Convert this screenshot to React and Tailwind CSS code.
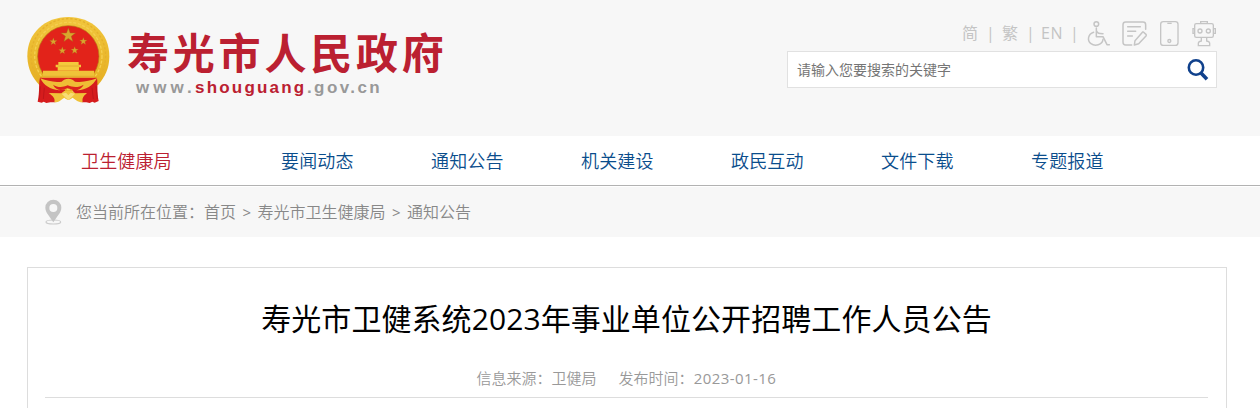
import { clsx } from 'clsx'

const navItems = ["卫生健康局", "要闻动态", "通知公告", "机关建设", "政民互动", "文件下载", "专题报道"]

export default function App() {
    return (
        <div className="h-[408px] w-[1260px] overflow-hidden bg-white font-['Open_Sans','Noto_Sans_CJK_SC',sans-serif]">
            <Header />
            <Nav />
            <Breadcrumb />
            <Article />
        </div>
    )
}

const Header = () => {
    return (
        <header className="flex h-[136px] justify-between bg-[#f7f7f7] pl-[27px] pr-[43px]">
            <div className="flex pt-4">
                <Emblem />
                <div className="ml-[16px] pt-[14px]">
                    <h1 className="h-[49px] whitespace-nowrap font-['Liberation_Sans','Noto_Sans_CJK_SC',sans-serif] text-[42px] leading-[49px] font-bold tracking-[3.8px] text-[#bb2031]">寿光市人民政府</h1>
                    <p className="ml-[9px] flex whitespace-nowrap font-['Liberation_Sans',sans-serif] text-[17px] leading-[18px] font-bold text-[#999]">
                        <span className="w-[59px] tracking-[4px]">www.</span>
                        <span className="w-[112px] tracking-[2.2px] text-[#bb2031]">shouguang</span>
                        <span className="tracking-[2.4px]">.gov.cn</span>
                    </p>
                </div>
            </div>
            <div className="flex w-[430px] flex-col">
                <div className="flex h-[51px] items-end justify-end pb-[4px]">
                    <div className="mr-[9px] flex h-[27px] items-center text-base leading-[27px] whitespace-pre text-[#c4c4c4]">
                        <span className="w-[24px]">简</span>
                        <span className="w-[16px]">|</span>
                        <span className="w-[24px]">繁</span>
                        <span className="w-[15px]">|</span>
                        <span className="w-[29px] tracking-[0.7px]">EN</span>
                        <span className="w-[8px]">|</span>
                    </div>
                    <Tools />
                </div>
                <div className="flex h-[37px] items-center justify-between border border-[#e1e1e1] bg-white pr-[7px] pl-[9px]">
                    <span className="text-[14px] text-[#757575]">请输入您要搜索的关键字</span>
                    <svg width="22" height="24" viewBox="0 0 22 24" fill="none" stroke="#10418c">
                        <circle cx="9" cy="9.5" r="7.2" strokeWidth="2.6" />
                        <path d="M14 15l6 6.3" strokeWidth="3.6" />
                    </svg>
                </div>
            </div>
        </header>
    )
}

const Star = ({ x, y, s }) => (
    <path
        transform={`translate(${x} ${y}) scale(${s})`}
        d="M0-10L2.5-3.2 9.8-3.1 4 1.3 6.1 8.3 0 4.2-6.1 8.3-4 1.3-9.8-3.1-2.5-3.2z"
        fill="#d9a62e"
        stroke="#a9631b"
        strokeWidth="0.6"
    />
)

const Emblem = () => {
    return (
        <svg className="shrink-0" width="84" height="88" viewBox="36 33 252 264">
            <defs>
                <linearGradient id="gold" x1="0" y1="0" x2="0" y2="1">
                    <stop offset="0" stopColor="#f1c63d" />
                    <stop offset="1" stopColor="#e5ad20" />
                </linearGradient>
            </defs>
            <path d="M160 36C90 36 36 84 37 154c1 42 18 66 34 84l28 20h124l28-20c18-22 32-46 32-84C283 84 230 36 160 36z" fill="url(#gold)" />
            <circle cx="160" cy="153" r="112" fill="none" stroke="#e5b02c" strokeWidth="4" strokeDasharray="7 6" />
            <circle cx="160" cy="153" r="101" fill="none" stroke="#f5cf50" strokeWidth="4" strokeDasharray="9 5" />
            <circle cx="160" cy="154" r="92" fill="#e2231a" stroke="#b67816" strokeWidth="2" />
            <Star x="160" y="91" s="2.2" />
            <Star x="115" y="110" s="1.15" />
            <Star x="205" y="109" s="1.15" />
            <Star x="142" y="137" s="1.15" />
            <Star x="179" y="136" s="1.15" />
            {/* gate tower */}
            <path d="M130 171h61v8h7v8h-6v10h-64v-10h-6v-8h8z" fill="#f4ca3c" />
            <path d="M84 197h153v22H84z" fill="#f0c239" />
            <path d="M128 183h65M84 214h153" stroke="#d9a429" strokeWidth="2" />
            <path d="M75 218l170 0-12 34H90z" fill="#d9201b" />
            {/* ribbons */}
            <path d="M75 218c-5 20 0 38-7 72l12 3 6-3 8 4 12-2h15l20-18 10-20z" fill="#d61c1d" />
            <path d="M246 220c3 18-1 40 5 68l-12 5-7-3-8 4-10-2h-13l-20-18-10-22z" fill="#d61c1d" />
            <path d="M76 244l-3 40M88 248l-3 34M243 244l4 38M231 248l4 34" stroke="#bb1519" strokeWidth="2.5" />
            <path d="M76 220c22 8 40 13 64 10 10-12 30-12 40 0 24 3 43-2 66-10-12 22-34 35-58 36l-28-5-28 5c-26-2-46-15-56-36z" fill="#efbd35" />
            <path d="M114 239c14 8 26 10 44 2 19 8 34 6 48-2-12 22-32 18-48 10-16 8-34 10-44-10z" fill="#dc231c" />
            <path d="M101 264l38 1 9-7h24l9 7 35-1c-14 12-14 16-13 28-16 0-23-11-31-14-9 9-15 8-24 0-10 5-14 14-30 14 3-10-2-18-17-28z" fill="#f0c238" />
            <path d="M140 266l13-3 7 8 7-8 13 3-12 12-8 6-8-6z" fill="#f8dd75" />
        </svg>
    )
}

const Tools = () => {
    return (
        <div className="flex text-[#c5c5c5]">
            <svg className="mr-[10px]" width="24" height="27" viewBox="0 0 72 81" fill="none" stroke="currentColor" strokeWidth="4.5" strokeLinecap="round" strokeLinejoin="round">
                <circle cx="28" cy="12" r="7" />
                <path d="M28 24v26h20l12 24h7M28 32c4 9 8 9 20 9" />
                <path d="M20 37C2 43 0 62 12 71s34 4 36-13" />
            </svg>
            <svg className="mr-[11px]" width="27" height="27" viewBox="0 0 81 81" fill="none" stroke="currentColor" strokeWidth="4.5" strokeLinecap="round" strokeLinejoin="round">
                <path d="M32 75H14q-8 0-8-8V14q0-8 8-8h52q8 0 8 8v14M20 20h38M20 34h24M20 48h14" />
                <path d="M67 36l8 7q2 2 0 5L53 71l-13 4 2-13 23-26q1-1 2 0z" />
            </svg>
            <svg className="mr-[11px]" width="21" height="27" viewBox="0 0 63 81" fill="none" stroke="currentColor" strokeWidth="4">
                <rect x="5" y="5" width="52" height="71" rx="8" />
                <path d="M25 10h13" />
                <circle cx="31" cy="63" r="4.5" />
            </svg>
            <svg width="26" height="27" viewBox="0 0 78 81" fill="none" stroke="currentColor" strokeWidth="4">
                <rect x="11" y="11" width="56" height="41" rx="5" />
                <path d="M29 10V5h20v5M10 26H6v14h4M68 26h5v14h-5M31 53v10q-8 1-9 6v8h34v-8q-1-5-9-6V53" />
                <circle cx="27" cy="33" r="6" />
                <circle cx="52" cy="33" r="6" />
            </svg>
        </div>
    )
}

const Nav = () => {
    return (
        <nav className="flex h-[50px] border-b border-[#b2b2b2] bg-white pl-[81px] text-[18px] leading-[50px]">
            {navItems.map((item, i) => (
                <a key={item} className={clsx("shrink-0 font-[350] tracking-[0.15px]", i === 0 ? "w-[200px] text-[#bb2031]" : "w-[150px] text-[#0a4d8c]")}>{item}</a>
            ))}
        </nav>
    )
}

const Breadcrumb = () => {
    return (
        <div className="mt-px flex h-[50px] items-center bg-[#f7f7f7] pl-[45px] text-base text-[#888]">
            <svg className="mr-[14px]" width="17" height="26" viewBox="0 0 51 78">
                <ellipse cx="25" cy="69" rx="22" ry="6" fill="none" stroke="#ccc" strokeWidth="3.5" />
                <path fillRule="evenodd" d="M25 2a24 24 0 0 0-24 24c0 15 13 25 24 44 11-19 24-29 24-44A24 24 0 0 0 25 2zm0 13a12 12 0 1 1 0 24 12 12 0 0 1 0-24z" fill="#c4c4c4" />
            </svg>
            <span className="w-[128px] font-[350] whitespace-nowrap">您当前所在位置：</span>
            <span className="font-[350]">首页</span>
            <span className="w-[21.5px] text-center text-[15px]">&gt;</span>
            <span className="font-[350]">寿光市卫生健康局</span>
            <span className="w-[21.5px] text-center text-[15px]">&gt;</span>
            <span className="font-[350]">通知公告</span>
        </div>
    )
}

const Article = () => {
    return (
        <main className="mt-[30px] ml-[27px] h-[160px] w-[1200px] border border-[#ddd] pr-[18px] pl-[17px]">
            <div className="h-[130px] border-b border-[#ddd] text-center">
                <h2 className="pt-[26px] text-[30px] leading-[50px] font-normal tracking-[0.08px] text-black">寿光市卫健系统2023年事业单位公开招聘工作人员公告</h2>
                <p className="mt-[23px] flex justify-center gap-[22px] text-[15px] leading-[22px] font-[350] text-[#999]">
                    <span>信息来源：卫健局</span>
                    <span>发布时间：<span className="font-normal tracking-[0.45px]">2023-01-16</span></span>
                </p>
            </div>
        </main>
    )
}
